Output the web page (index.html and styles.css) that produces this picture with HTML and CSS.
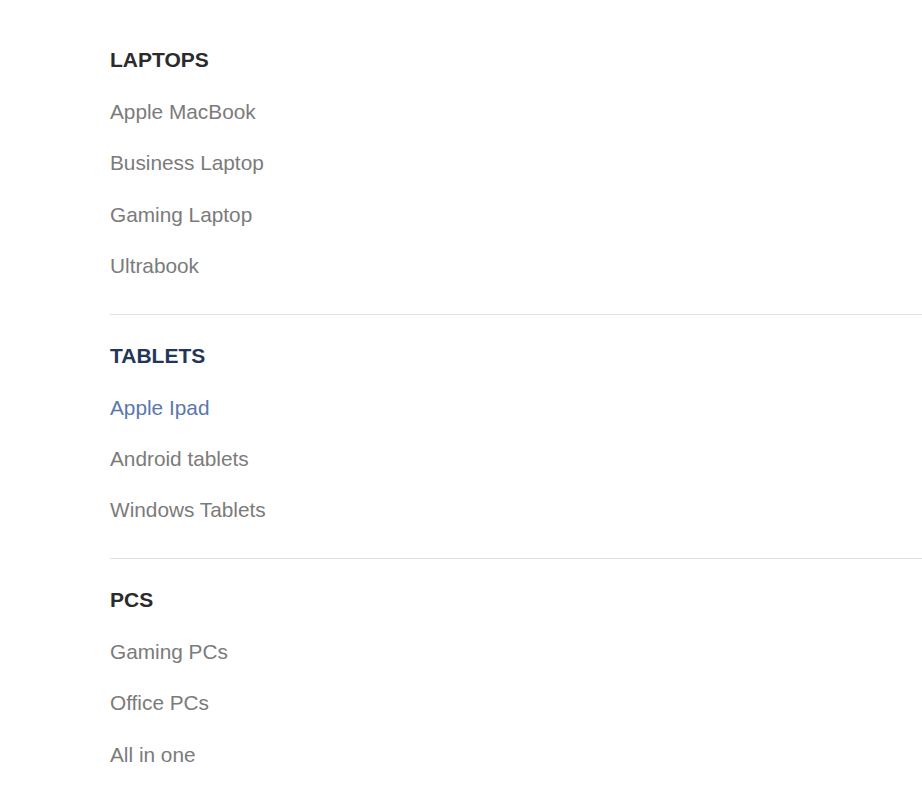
FILE: index.html
```html
<!DOCTYPE html>
<html lang="en">
<head>
<meta charset="utf-8">
<title>Categories</title>
<link rel="stylesheet" href="styles.css">
</head>
<body>
<nav class="menu">
  <section class="group">
    <h2 class="group-title">LAPTOPS</h2>
    <ul class="group-list">
      <li><a href="#">Apple MacBook</a></li>
      <li><a href="#">Business Laptop</a></li>
      <li><a href="#">Gaming Laptop</a></li>
      <li><a href="#">Ultrabook</a></li>
    </ul>
  </section>
  <section class="group group-active">
    <h2 class="group-title">TABLETS</h2>
    <ul class="group-list">
      <li><a href="#" class="active">Apple Ipad</a></li>
      <li><a href="#">Android tablets</a></li>
      <li><a href="#">Windows Tablets</a></li>
    </ul>
  </section>
  <section class="group">
    <h2 class="group-title">PCS</h2>
    <ul class="group-list">
      <li><a href="#">Gaming PCs</a></li>
      <li><a href="#">Office PCs</a></li>
      <li><a href="#">All in one</a></li>
    </ul>
  </section>
</nav>
</body>
</html>
```

FILE: styles.css
```css
html, body {
  margin: 0;
  padding: 0;
  background: #ffffff;
}

body {
  font-family: "Liberation Sans", Arial, sans-serif;
}

.menu {
  padding: 48px 0 0 110px;
}

.group {
  padding-bottom: 22.5px;
}

.group + .group {
  border-top: 1px solid #e3e3e3;
  padding-top: 29px;
}

.group-title {
  margin: 0 0 14px 0;
  font-size: 21px;
  line-height: 24px;
  font-weight: bold;
  color: #2b2b2b;
}

.group-active .group-title {
  color: #243657;
}

.group-list {
  list-style: none;
  margin: 0;
  padding: 0;
}

.group-list li {
  line-height: 51.3px;
  font-size: 20.8px;
}

.group-list a {
  color: #7b7b7b;
  text-decoration: none;
}

.group-list a.active {
  color: #5a77ad;
}
```
